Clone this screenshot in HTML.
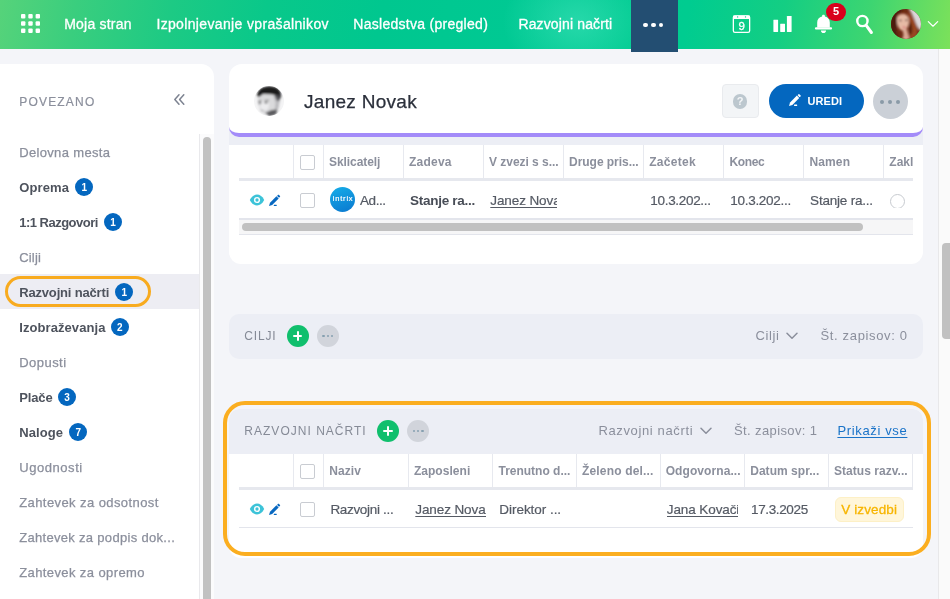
<!DOCTYPE html>
<html lang="sl">
<head>
<meta charset="utf-8">
<title>Janez Novak</title>
<style>
*{box-sizing:border-box;margin:0;padding:0}
html,body{width:950px;height:599px;overflow:hidden;background:#f4f5f9}
body{font-family:"Liberation Sans",sans-serif;position:relative;color:#3c4049}
.abs{position:absolute}
#app{position:absolute;left:0;top:0;width:950px;height:599px;overflow:hidden;will-change:transform}
.t{position:absolute;white-space:nowrap;line-height:1}
#hdr{position:absolute;left:0;top:0;width:950px;height:49px;background:radial-gradient(ellipse 75px 60px at 578px 22px,rgba(70,228,190,.55) 0,rgba(70,228,190,0) 100%),linear-gradient(100deg,#56d37a 0%,#3ace7e 8%,#1dca84 18%,#09c88a 28%,#00c78f 40%,#00c993 54%,#00cc90 72%,#14ce83 82%,#3dd571 91%,#7ce15a 100%)}
.nav{color:#fff;-webkit-text-stroke:.3px #fff}
#more{position:absolute;left:631px;top:0;width:47px;height:52px;background:#234e72}
#more i{position:absolute;top:23.100px;width:4.300px;height:4.300px;border-radius:50%;background:#fff}
#side{position:absolute;left:0;top:64px;width:214px;height:535px;background:#fff;border-top-right-radius:13px}
.sh{color:#8b8f9c;-webkit-text-stroke:.2px #8b8f9c}
.sl{color:#8b8f9c;-webkit-text-stroke:.25px #8b8f9c}
.sb{color:#4e535d;font-weight:bold}
.bdg{position:absolute;width:18px;height:18px;border-radius:50%;background:#0467bf;color:#fff;font-size:10px;font-weight:bold;text-align:center;line-height:19px}
.pn{color:#2b303b;-webkit-text-stroke:.25px #2b303b}
.ur{color:#fff;font-weight:bold}
.th{font-weight:bold;color:#8b8f9c}
.td{color:#555a64;-webkit-text-stroke:.2px #555a64}
.tdb{color:#484d57;font-weight:bold}
.tdu{color:#555a64;-webkit-text-stroke:.2px #555a64}
.tdu span{text-decoration:underline;text-underline-offset:1.5px;text-decoration-thickness:1px}
.tag{color:#f7b500;-webkit-text-stroke:.3px #f7b500}
.lnk{color:#1a73c8}
.lnk span{text-decoration:underline;text-underline-offset:1.5px;text-decoration-thickness:1px}
.vs{position:absolute;width:1.4px;background:#e7e9ef}
.hs{position:absolute;background:#e3e5ec}
.cb{position:absolute;width:15px;height:15px;border:1px solid #c9ccd2;border-radius:2px;background:#fff}
.sec{position:absolute;left:229px;width:694px;height:45px;background:#eceef5}
.sect{color:#858a96}
.secr{color:#8b8f9c}
.plus{position:absolute;width:22px;height:22px;border-radius:50%;background:#10bf6d}
.plus:before{content:"";position:absolute;left:6.200px;top:10.050px;width:9.600px;height:1.900px;background:#fff;border-radius:1px}
.plus:after{content:"";position:absolute;left:10.050px;top:6.200px;width:1.900px;height:9.600px;background:#fff;border-radius:1px}
.dots{position:absolute;width:22px;height:22px;border-radius:50%;background:#d1d4db}
.dots i{position:absolute;top:9.800px;width:2.400px;height:2.400px;border-radius:50%;background:#86a0b0}
</style>
</head>
<body>
<div id="app">
<!-- HEADER -->
<div id="hdr"></div>
<div id="more"><i style="left:12.450px"></i><i style="left:20.350px"></i><i style="left:28.150px"></i></div>
<svg class="abs" style="left:21px;top:14px" width="19" height="19" viewBox="0 0 19 19" fill="#fff">
<rect x="0" y="0" width="4.4" height="4.4" rx="1"/><rect x="7.3" y="0" width="4.4" height="4.4" rx="1"/><rect x="14.6" y="0" width="4.4" height="4.4" rx="1"/>
<rect x="0" y="7.3" width="4.4" height="4.4" rx="1"/><rect x="7.3" y="7.3" width="4.4" height="4.4" rx="1"/><rect x="14.6" y="7.3" width="4.4" height="4.4" rx="1"/>
<rect x="0" y="14.6" width="4.4" height="4.4" rx="1"/><rect x="7.3" y="14.6" width="4.4" height="4.4" rx="1"/><rect x="14.6" y="14.6" width="4.4" height="4.4" rx="1"/>
</svg>
<!-- calendar -->
<svg class="abs" style="left:730px;top:13px" width="24" height="24" viewBox="730 13 24 24">
<rect x="733.350" y="15.850" width="16.300" height="16.600" rx="1.600" fill="none" stroke="#fff" stroke-width="1.300"/>
<rect x="733" y="15.500" width="17" height="3.500" rx="1" fill="#fff"/>
<circle cx="737.600" cy="16.900" r=".7" fill="#0bcb90"/><circle cx="745.500" cy="16.900" r=".7" fill="#0bcb90"/>
<text x="741.800" y="30.100" font-family="Liberation Sans, sans-serif" font-size="11.500" fill="#fff" stroke="#fff" stroke-width=".3" text-anchor="middle">9</text>
</svg>
<!-- bars -->
<svg class="abs" style="left:770px;top:13px" width="26" height="22" viewBox="770 13 26 22" fill="#fff">
<rect x="773.400" y="19.700" width="4.700" height="12.200" rx=".4"/><rect x="780.200" y="23.700" width="4.800" height="8.200" rx=".4"/><rect x="786.900" y="16" width="4.700" height="15.900" rx=".4"/>
</svg>
<!-- bell -->
<svg class="abs" style="left:810px;top:10px" width="28" height="28" viewBox="810 10 28 28" fill="#fff">
<path d="M823.500 14.800c-.8 0-1.400.5-1.400 1.200v.4c-2.900.6-4.900 2.900-4.900 6v5.200h12.600v-5.200c0-3.100-2-5.400-4.900-6v-.4c0-.7-.6-1.200-1.400-1.200z"/>
<rect x="814.900" y="27.300" width="17.200" height="2.200" rx="1.100"/>
<path d="M820.900 30.400h5.200c0 1.500-1.100 2.600-2.600 2.600s-2.600-1.100-2.600-2.600z"/>
</svg>
<div class="abs" style="left:826px;top:2.700px;width:20px;height:18.400px;border-radius:9.500px;background:#d9011c"></div>
<div class="t" style="left:826px;top:6.400px;width:20px;text-align:center;color:#fff;font-weight:bold;font-size:11px">5</div>
<!-- search -->
<svg class="abs" style="left:852px;top:12px" width="24" height="24" viewBox="852 12 24 24" fill="none" stroke="#fff" stroke-linecap="round">
<circle cx="862.400" cy="21" r="5.150" stroke-width="2.400"/><path d="M866.200 25.300L871.400 32.500" stroke-width="3"/>
</svg>
<!-- avatar -->
<svg class="abs" style="left:891px;top:8.800px" width="30" height="30" viewBox="0 0 30 30">
<defs><clipPath id="avc"><circle cx="15" cy="15" r="15"/></clipPath><filter id="bl1" x="-30%" y="-30%" width="160%" height="160%"><feGaussianBlur stdDeviation=".95"/></filter></defs>
<g clip-path="url(#avc)">
<rect width="30" height="30" fill="#6e2a14"/>
<g filter="url(#bl1)">
<path d="M17 -1C20 3 22.500 8 25.500 16C26.500 18.500 28 20.500 29 21.500L32 21V-2z" fill="#dbd6da"/>
<path d="M-1 8C2 3 6 0 12 0L8 8L5 20L7 30L-1 30z" fill="#4e1e0e"/>
<path d="M16 2C20 5 23 10 25 16C26 19 27 22 26 26L22 30L17 29L19 20L18 8z" fill="#9a4722"/>
<path d="M19 12C21 15 22 19 21 24L18.500 27L18 18z" fill="#5c2410"/>
<path d="M6 9C7 5.500 10 4.800 12.500 5C16 5.300 18.200 8 18 12.500C17.800 16.500 16.500 19.500 14 21.300C12 22.300 9.500 21.500 8 19C6.300 16.500 5.600 12.500 6 9z" fill="#e6baa5"/>
<path d="M11.500 21L16 20L17.500 26L18.500 31L11 31L12.500 26z" fill="#d9a693"/>
<ellipse cx="13.200" cy="18.300" rx="2.100" ry=".9" fill="#d9797c"/>
<ellipse cx="9.400" cy="11.600" rx="1.500" ry=".75" fill="#5a3c38"/><ellipse cx="15.500" cy="11.300" rx="1.500" ry=".75" fill="#5a3c38"/>
<path d="M6 6C8 3.500 12 3 15 4.500L13 5.500C10.500 5 8 6 6.500 8z" fill="#8a3a1c"/>
</g></g></svg>
<svg class="abs" style="left:926px;top:19px" width="14" height="10" viewBox="926 19 14 10" fill="none" stroke="#fff" stroke-width="1.200" stroke-linecap="round" stroke-linejoin="round"><path d="M928.300 21.600l4.700 4.600 4.700-4.600"/></svg>

<!-- SIDEBAR -->
<div id="side"></div>
<div class="abs" style="left:0;top:274px;width:199.200px;height:35px;background:#ededf3"></div>
<div class="abs" style="left:5px;top:276px;width:146px;height:30.500px;border:3px solid #f8ab1f;border-radius:16px"></div>
<div class="abs" style="left:199.200px;top:134px;width:14.800px;height:465px;background:#fbfbfc;border-left:1px solid #e9e9ec"></div>
<div class="abs" style="left:203.300px;top:137px;width:7.500px;height:470px;border-radius:4px;background:#c1c1c1"></div>
<svg class="abs" style="left:172px;top:92px" width="14" height="15" viewBox="172 92 14 15" fill="none" stroke="#7d8391" stroke-width="1.500" stroke-linecap="round" stroke-linejoin="round"><path d="M179 94.800l-4.200 4.700 4.200 4.700M183.800 94.800l-4.200 4.700 4.200 4.700"/></svg>
<div class="bdg" style="left:75.400px;top:178.300px">1</div>
<div class="bdg" style="left:104px;top:213.300px">1</div>
<div class="bdg" style="left:115.400px;top:283.300px">1</div>
<div class="bdg" style="left:110.700px;top:318.300px">2</div>
<div class="bdg" style="left:58px;top:388.300px">3</div>
<div class="bdg" style="left:69.200px;top:423.300px">7</div>

<!-- PAGE HEADER CARD -->
<div class="abs" style="left:229px;top:126px;width:694px;height:19px;background:#eceef5"></div>
<div class="abs" style="left:229px;top:64px;width:694px;height:72.500px;background:#fff;border-bottom:4px solid #a38bf9;border-radius:13px 13px 10px 10px"></div>
<!-- person avatar -->
<svg class="abs" style="left:254px;top:85.700px" width="30" height="30" viewBox="0 0 30 30">
<defs><clipPath id="pvc"><circle cx="15" cy="15" r="15"/></clipPath><filter id="bl2" x="-30%" y="-30%" width="160%" height="160%"><feGaussianBlur stdDeviation=".9"/></filter></defs>
<g clip-path="url(#pvc)">
<rect width="30" height="30" fill="#f4f4f5"/>
<g filter="url(#bl2)">
<path d="M4 9L3.600 14L4.300 19L6 23.500L9 27.500L17 29.500L24 24L25.700 15L25 9L15 5z" fill="#dadadc"/>
<ellipse cx="10.500" cy="19" rx="4.500" ry="5.500" fill="#ececee"/>
<path d="M19.500 10L25 10L25.800 15L24.500 22L20.500 25L21.500 17z" fill="#bcbcbf"/>
<path d="M11 27L17.500 24L23.500 23.500L22 28.500L16 30.500z" fill="#5c5c5f"/>
<path d="M3.300 10.500C2.800 4 8 .2 15.500 .2S27.800 4 27 11L25.500 13.500C24.500 10.500 21.500 8.700 17 8.300L9 8L5 11z" fill="#1d1d1f"/>
<path d="M20 8.500L26.500 9L25.600 14.500L23 15z" fill="#4a4a4d" opacity=".8"/>
<ellipse cx="6" cy="17.300" rx="1.500" ry=".8" fill="#48484a"/><ellipse cx="12" cy="16.600" rx="1.900" ry=".8" fill="#48484a"/>
<path d="M4 15.300L8 14.800M10 14.500L15 14.300" stroke="#555" stroke-width=".8" fill="none"/>
<ellipse cx="8" cy="24.500" rx="1.800" ry=".6" fill="#9a9a9c"/>
</g></g></svg>
<!-- help btn -->
<div class="abs" style="left:722px;top:84px;width:36.500px;height:34px;background:#f3f5f7;border:1px solid #e9ebee;border-radius:4px"></div>
<div class="abs" style="left:732.800px;top:94px;width:14.500px;height:14.500px;border-radius:50%;background:#bcc7ce"></div>
<div class="t" style="left:732.800px;top:96px;width:14.500px;text-align:center;color:#f3f5f7;font-weight:bold;font-size:11px">?</div>
<!-- uredi -->
<div class="abs" style="left:769px;top:84px;width:95px;height:34px;border-radius:17px;background:#0467bf"></div>
<svg class="abs" style="left:786.4px;top:92.0px" width="18" height="18" viewBox="-3 -14 18 18" fill="#fff"><g transform="rotate(-45.500) scale(1.06)"><path d="M0 0L3 -1.550L12.200 -1.550L12.200 1.550L3 1.550z"/><rect x="12.900" y="-1.400" width="1.900" height="2.800" rx=".5"/></g><rect x="5.09" y="-1.38" width="3.07" height="1.48" rx=".3"/></svg>
<!-- more btn -->
<div class="abs" style="left:872.800px;top:83.700px;width:35px;height:35px;border-radius:50%;background:#cbd0d7"></div>
<div class="abs" style="left:880.200px;top:99.700px;width:4px;height:4px;border-radius:50%;background:#8a9aa7"></div>
<div class="abs" style="left:888.300px;top:99.700px;width:4px;height:4px;border-radius:50%;background:#8a9aa7"></div>
<div class="abs" style="left:896.300px;top:99.700px;width:4px;height:4px;border-radius:50%;background:#8a9aa7"></div>

<!-- TABLE CARD 1 -->
<div class="abs" style="left:229px;top:144.500px;width:694px;height:119px;background:#fff;border-radius:0 0 12px 12px"></div>
<div class="vs" style="left:292.800px;top:144.500px;height:34px"></div>
<div class="vs" style="left:322.900px;top:144.500px;height:34px"></div>
<div class="vs" style="left:402.700px;top:144.500px;height:34px"></div>
<div class="vs" style="left:482.700px;top:144.500px;height:34px"></div>
<div class="vs" style="left:562.700px;top:144.500px;height:34px"></div>
<div class="vs" style="left:642.700px;top:144.500px;height:34px"></div>
<div class="vs" style="left:722.600px;top:144.500px;height:34px"></div>
<div class="vs" style="left:802.500px;top:144.500px;height:34px"></div>
<div class="vs" style="left:882.800px;top:144.500px;height:34px"></div>
<div class="hs" style="left:239px;top:178px;width:674px;height:3px;background:#e6e8ee"></div>
<div class="hs" style="left:239px;top:218px;width:674px;height:1.500px"></div>
<div class="abs" style="left:239px;top:219.500px;width:674px;height:14px;background:#f6f6f7"></div>
<div class="abs" style="left:241.800px;top:223px;width:621px;height:8px;border-radius:4px;background:#c1c1c1"></div>
<div class="hs" style="left:239px;top:233.500px;width:674px;height:1.500px"></div>
<div class="cb" style="left:300px;top:155px"></div>
<div class="cb" style="left:300px;top:193px"></div>
<!-- row icons -->
<svg class="abs" style="left:247.0px;top:191.7px" width="20" height="16" viewBox="-10 -8 20 16"><path d="M-7.200 0C-5.600 -3.400 -2.900 -5.400 0 -5.400S5.600 -3.400 7.200 0C5.600 3.400 2.900 5.400 0 5.400S-5.600 3.400 -7.200 0z" fill="#3cc3d8"/><circle cx="0" cy="0" r="3.100" fill="#fff"/><circle cx="0" cy="0" r="1.650" fill="#3cc3d8"/></svg>
<svg class="abs" style="left:266.2px;top:191.7px" width="18" height="18" viewBox="-3 -14 18 18" fill="#0868c0"><g transform="rotate(-45.500) scale(1)"><path d="M0 0L3 -1.550L12.200 -1.550L12.200 1.550L3 1.550z"/><rect x="12.900" y="-1.400" width="1.900" height="2.800" rx=".5"/></g><rect x="4.80" y="-1.30" width="2.90" height="1.40" rx=".3"/></svg>
<!-- intrix logo -->
<div class="abs" style="left:330px;top:187px;width:25px;height:25px;border-radius:50%;background:linear-gradient(160deg,#14a8e6 10%,#0b7ad0 95%)"></div>
<div class="t" style="left:330px;top:195.300px;width:25.400px;text-align:center;color:#fff;-webkit-text-stroke:.2px #fff;font-size:7.500px;letter-spacing:.8px;text-indent:.8px">intrix</div>
<!-- radio -->
<div class="abs" style="left:890px;top:194px;width:16px;height:13.700px;overflow:hidden"><div class="abs" style="left:0;top:0;width:15px;height:15px;border-radius:50%;border:1px solid #c6cacf;background:#fff"></div></div>

<!-- CILJI -->
<div class="sec" style="top:314.300px;border-radius:10px"></div>
<div class="plus" style="left:286.600px;top:325.300px"></div>
<div class="dots" style="left:316.900px;top:325.300px"><i style="left:5.600px"></i><i style="left:9.800px"></i><i style="left:14px"></i></div>
<svg class="abs" style="left:786px;top:332px" width="12" height="8" viewBox="0 0 12 8" fill="none" stroke="#8b8f9c" stroke-width="1.500" stroke-linecap="round" stroke-linejoin="round"><path d="M1 1.200l5 5 5-5"/></svg>

<!-- RAZVOJNI NACRTI -->
<div class="abs" style="left:229px;top:408.500px;width:694px;height:149.500px;background:#fff;border-radius:10px 10px 12px 12px"></div>
<div class="sec" style="top:408.500px;border-radius:10px 10px 0 0"></div>
<div class="plus" style="left:377px;top:420px"></div>
<div class="dots" style="left:407.200px;top:420px"><i style="left:5.600px"></i><i style="left:9.800px"></i><i style="left:14px"></i></div>
<svg class="abs" style="left:699.500px;top:427px" width="12" height="8" viewBox="0 0 12 8" fill="none" stroke="#8b8f9c" stroke-width="1.500" stroke-linecap="round" stroke-linejoin="round"><path d="M1 1.200l5 5 5-5"/></svg>
<div class="vs" style="left:292.800px;top:453.700px;height:34px"></div>
<div class="vs" style="left:322.900px;top:453.700px;height:34px"></div>
<div class="vs" style="left:407.600px;top:453.700px;height:34px"></div>
<div class="vs" style="left:491.700px;top:453.700px;height:34px"></div>
<div class="vs" style="left:575.800px;top:453.700px;height:34px"></div>
<div class="vs" style="left:660px;top:453.700px;height:34px"></div>
<div class="vs" style="left:743.800px;top:453.700px;height:34px"></div>
<div class="vs" style="left:827.600px;top:453.700px;height:34px"></div>
<div class="vs" style="left:912px;top:453.700px;height:34px"></div>
<div class="hs" style="left:239px;top:487px;width:674px;height:3px;background:#e6e8ee"></div>
<div class="hs" style="left:239px;top:526.700px;width:674px;height:1.500px"></div>
<div class="cb" style="left:300px;top:464px"></div>
<div class="cb" style="left:300px;top:502px"></div>
<svg class="abs" style="left:247.0px;top:500.7px" width="20" height="16" viewBox="-10 -8 20 16"><path d="M-7.200 0C-5.600 -3.400 -2.900 -5.400 0 -5.400S5.600 -3.400 7.200 0C5.600 3.400 2.900 5.400 0 5.400S-5.600 3.400 -7.200 0z" fill="#3cc3d8"/><circle cx="0" cy="0" r="3.100" fill="#fff"/><circle cx="0" cy="0" r="1.650" fill="#3cc3d8"/></svg>
<svg class="abs" style="left:266.2px;top:500.7px" width="18" height="18" viewBox="-3 -14 18 18" fill="#0868c0"><g transform="rotate(-45.500) scale(1)"><path d="M0 0L3 -1.550L12.200 -1.550L12.200 1.550L3 1.550z"/><rect x="12.900" y="-1.400" width="1.900" height="2.800" rx=".5"/></g><rect x="4.80" y="-1.30" width="2.90" height="1.40" rx=".3"/></svg>
<div class="abs" style="left:835px;top:497.200px;width:69px;height:24.600px;background:#fff6da;border:1px solid #fdf0c6;border-radius:6px"></div>
<!-- orange frame -->
<div class="abs" style="left:223px;top:401px;width:708px;height:154.700px;border:4px solid #fbae20;border-radius:22px"></div>

<!-- right scrollbar -->
<div class="abs" style="left:938.300px;top:49px;width:12px;height:550px;background:#fafafa;border-left:1px solid #e8e8ea"></div>
<div class="abs" style="left:942px;top:242.700px;width:12px;height:96px;border-radius:4px;background:#c1c1c1"></div>

<div class="t nav" style="left:64.2px;top:17.3px;font-size:14px;letter-spacing:0.22px;"><span id="n1">Moja stran</span></div>
<div class="t nav" style="left:156.4px;top:17.3px;font-size:14px;letter-spacing:0.35px;"><span id="n2">Izpolnjevanje vprašalnikov</span></div>
<div class="t nav" style="left:353.3px;top:17.3px;font-size:14px;letter-spacing:0.28px;"><span id="n3">Nasledstva (pregled)</span></div>
<div class="t nav" style="left:518.4px;top:17.3px;font-size:14px;letter-spacing:0.14px;"><span id="n4">Razvojni načrti</span></div>
<div class="t sh" style="left:19.2px;top:95.9px;font-size:12px;letter-spacing:1.20px;"><span id="s0">POVEZANO</span></div>
<div class="t sl" style="left:19.2px;top:145.9px;font-size:13px;letter-spacing:0.34px;"><span id="s1">Delovna mesta</span></div>
<div class="t sb" style="left:19.2px;top:180.9px;font-size:13px;letter-spacing:0.11px;"><span id="s2">Oprema</span></div>
<div class="t sb" style="left:19.2px;top:215.9px;font-size:13px;letter-spacing:-0.51px;"><span id="s3">1:1 Razgovori</span></div>
<div class="t sl" style="left:19.2px;top:250.9px;font-size:13px;letter-spacing:0.19px;"><span id="s4">Cilji</span></div>
<div class="t sb" style="left:19.2px;top:285.9px;font-size:13px;letter-spacing:-0.17px;"><span id="s5">Razvojni načrti</span></div>
<div class="t sb" style="left:19.2px;top:320.9px;font-size:13px;letter-spacing:0.08px;"><span id="s6">Izobraževanja</span></div>
<div class="t sl" style="left:19.2px;top:355.9px;font-size:13px;letter-spacing:0.47px;"><span id="s7">Dopusti</span></div>
<div class="t sb" style="left:19.2px;top:390.9px;font-size:13px;letter-spacing:-0.12px;"><span id="s8">Plače</span></div>
<div class="t sb" style="left:19.2px;top:425.9px;font-size:13px;letter-spacing:0.09px;"><span id="s9">Naloge</span></div>
<div class="t sl" style="left:19.2px;top:460.9px;font-size:13px;letter-spacing:0.56px;"><span id="s10">Ugodnosti</span></div>
<div class="t sl" style="left:19.2px;top:495.9px;font-size:13px;letter-spacing:0.42px;"><span id="s11">Zahtevek za odsotnost</span></div>
<div class="t sl" style="left:19.2px;top:530.9px;font-size:13px;letter-spacing:0.31px;"><span id="s12">Zahtevek za podpis dok...</span></div>
<div class="t sl" style="left:19.2px;top:565.9px;font-size:13px;letter-spacing:0.40px;"><span id="s13">Zahtevek za opremo</span></div>
<div class="t pn" style="left:304.0px;top:92.0px;font-size:19px;letter-spacing:0.28px;"><span id="pn">Janez Novak</span></div>
<div class="t ur" style="left:807.4px;top:96.0px;font-size:11px;letter-spacing:0.09px;"><span id="ur">UREDI</span></div>
<div class="t th" style="left:329.0px;top:156.1px;font-size:12px;letter-spacing:-0.07px;"><span id="h11">Sklicatelj</span></div>
<div class="t th" style="left:409.0px;top:156.1px;font-size:12px;letter-spacing:0.23px;"><span id="h12">Zadeva</span></div>
<div class="t th" style="left:489.0px;top:156.1px;font-size:12px;letter-spacing:-0.03px;"><span id="h13">V zvezi s s...</span></div>
<div class="t th" style="left:569.0px;top:156.1px;font-size:12px;letter-spacing:-0.03px;"><span id="h14">Druge pris...</span></div>
<div class="t th" style="left:649.2px;top:156.1px;font-size:12px;letter-spacing:0.28px;"><span id="h15">Začetek</span></div>
<div class="t th" style="left:729.4px;top:156.1px;font-size:12px;letter-spacing:-0.32px;"><span id="h16">Konec</span></div>
<div class="t th" style="left:809.4px;top:156.1px;font-size:12px;letter-spacing:0.15px;"><span id="h17">Namen</span></div>
<div class="t th" style="left:889.3px;top:156.1px;font-size:12px;width:23.6px;overflow:hidden;height:18px;"><span id="h18">Zaključeno</span></div>
<div class="t td" style="left:360.0px;top:194.0px;font-size:13.5px;letter-spacing:-0.44px;"><span id="b11">Ad...</span></div>
<div class="t tdb" style="left:410.0px;top:194.0px;font-size:13.5px;letter-spacing:-0.27px;"><span id="b12">Stanje ra...</span></div>
<div class="t tdu" style="left:490.3px;top:194.0px;font-size:13.5px;letter-spacing:-0.1px;width:66.5px;overflow:hidden;height:19.5px;"><span id="b13">Janez Novak</span></div>
<div class="t td" style="left:650.3px;top:194.0px;font-size:13.5px;letter-spacing:-0.31px;"><span id="b15">10.3.202...</span></div>
<div class="t td" style="left:730.2px;top:194.0px;font-size:13.5px;letter-spacing:-0.27px;"><span id="b16">10.3.202...</span></div>
<div class="t td" style="left:810.1px;top:194.0px;font-size:13.5px;letter-spacing:-0.21px;"><span id="b17">Stanje ra...</span></div>
<div class="t sect" style="left:244.3px;top:330.2px;font-size:12px;letter-spacing:0.82px;"><span id="c1">CILJI</span></div>
<div class="t secr" style="left:755.6px;top:329.0px;font-size:13px;letter-spacing:0.61px;"><span id="c2">Cilji</span></div>
<div class="t secr" style="left:820.5px;top:329.0px;font-size:13px;letter-spacing:0.65px;"><span id="c3">Št. zapisov: 0</span></div>
<div class="t sect" style="left:244.3px;top:425.2px;font-size:12px;letter-spacing:1.02px;"><span id="r1">RAZVOJNI NAČRTI</span></div>
<div class="t secr" style="left:598.4px;top:424.3px;font-size:13px;letter-spacing:0.64px;"><span id="r2">Razvojni načrti</span></div>
<div class="t secr" style="left:734.0px;top:424.3px;font-size:13px;letter-spacing:0.38px;"><span id="r3">Št. zapisov: 1</span></div>
<div class="t lnk" style="left:837.4px;top:424.3px;font-size:13px;letter-spacing:0.65px;"><span id="r4">Prikaži vse</span></div>
<div class="t th" style="left:329.3px;top:465.1px;font-size:12px;letter-spacing:0.04px;"><span id="h21">Naziv</span></div>
<div class="t th" style="left:413.9px;top:465.1px;font-size:12px;letter-spacing:0.05px;"><span id="h22">Zaposleni</span></div>
<div class="t th" style="left:498.5px;top:465.1px;font-size:12px;letter-spacing:-0.01px;"><span id="h23">Trenutno d...</span></div>
<div class="t th" style="left:582.0px;top:465.1px;font-size:12px;letter-spacing:0.17px;"><span id="h24">Želeno del...</span></div>
<div class="t th" style="left:665.7px;top:465.1px;font-size:12px;letter-spacing:0.08px;"><span id="h25">Odgovorna...</span></div>
<div class="t th" style="left:750.2px;top:465.1px;font-size:12px;letter-spacing:0.04px;"><span id="h26">Datum spr...</span></div>
<div class="t th" style="left:834.0px;top:465.1px;font-size:12px;letter-spacing:0.04px;"><span id="h27">Status razv...</span></div>
<div class="t td" style="left:330.4px;top:502.8px;font-size:13.5px;letter-spacing:-0.32px;"><span id="b21">Razvojni ...</span></div>
<div class="t tdu" style="left:415.3px;top:502.8px;font-size:13.5px;letter-spacing:-0.1px;width:70.6px;overflow:hidden;height:19.5px;"><span id="b22">Janez Novak</span></div>
<div class="t td" style="left:499.3px;top:502.8px;font-size:13.5px;letter-spacing:-0.04px;"><span id="b23">Direktor ...</span></div>
<div class="t tdu" style="left:666.8px;top:502.8px;font-size:13.5px;letter-spacing:-0.1px;width:71.1px;overflow:hidden;height:19.5px;"><span id="b25">Jana Kovačič</span></div>
<div class="t td" style="left:751.0px;top:502.8px;font-size:13.5px;letter-spacing:-0.36px;"><span id="b26">17.3.2025</span></div>
<div class="t tag" style="left:841.2px;top:502.8px;font-size:13.5px;letter-spacing:0.13px;"><span id="b27">V izvedbi</span></div>
</div>
</body>
</html>
